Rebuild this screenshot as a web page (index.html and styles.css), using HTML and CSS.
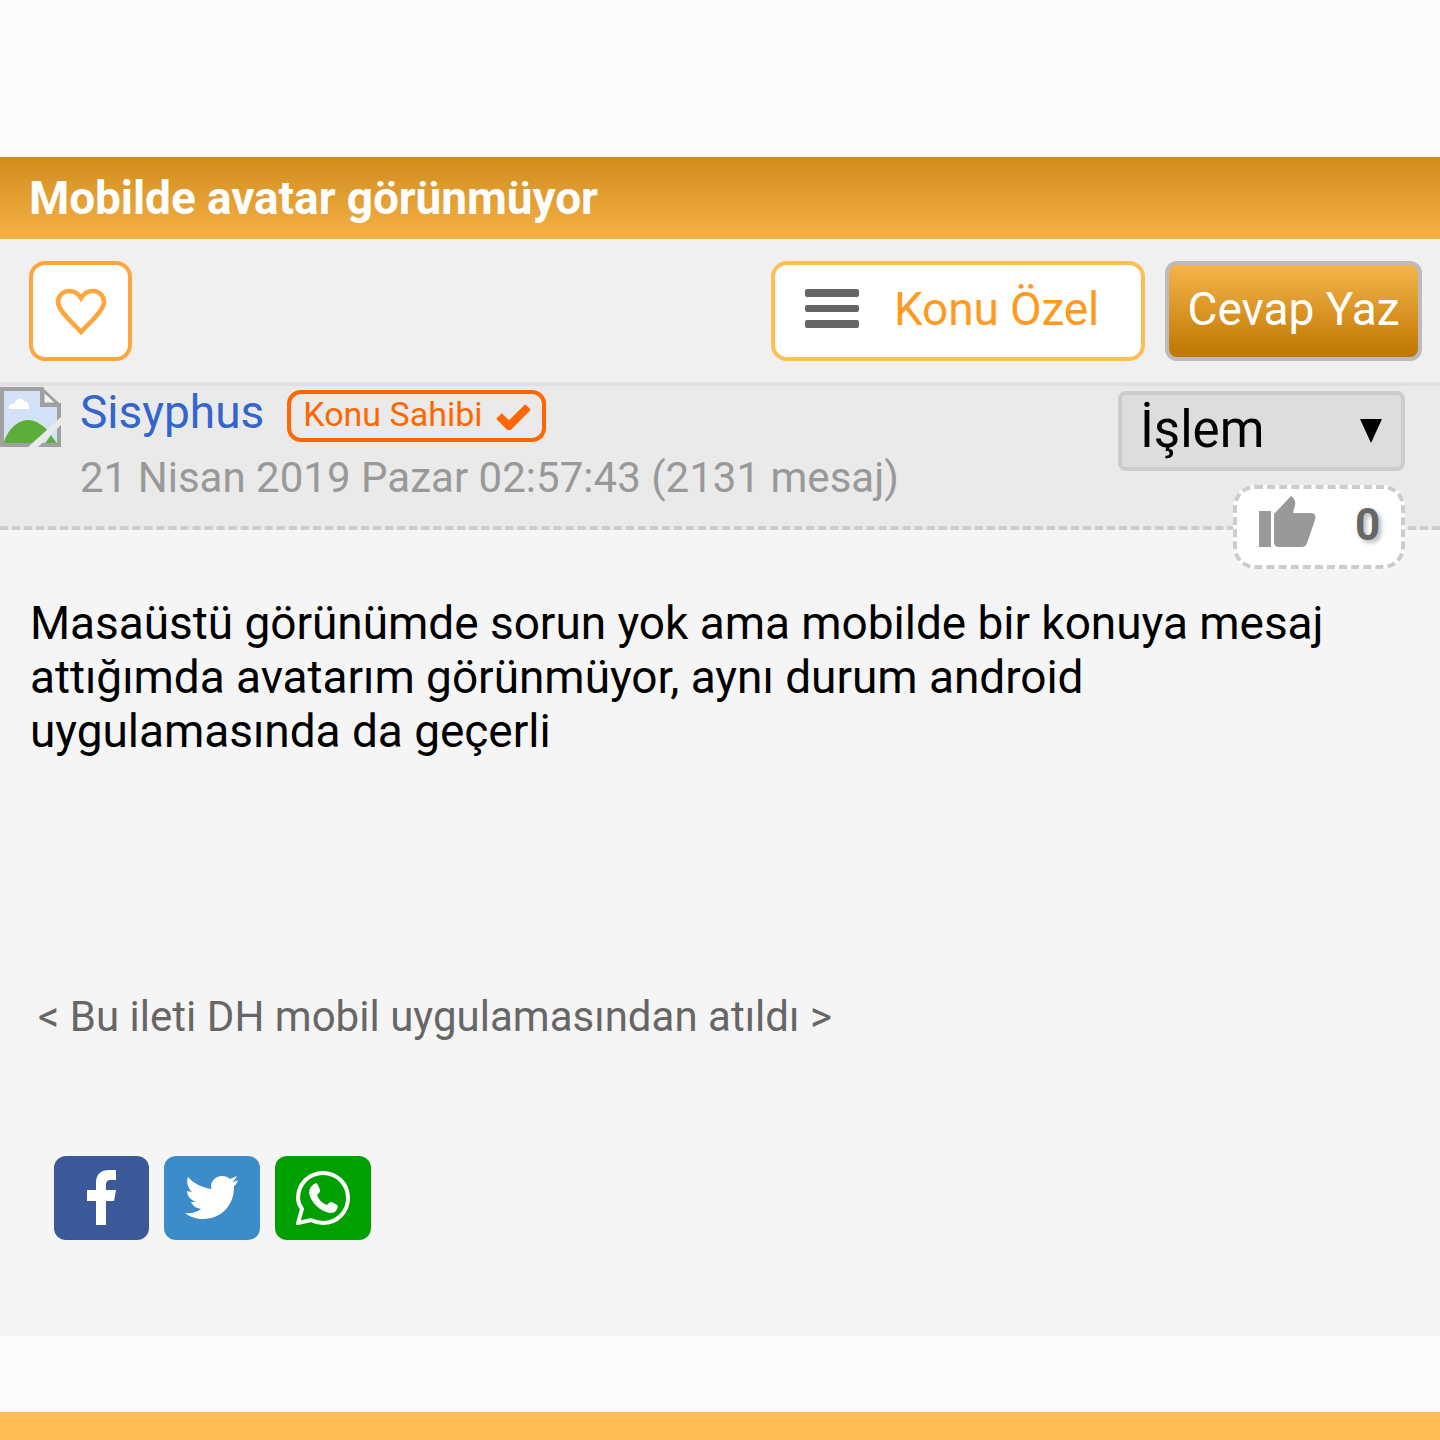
FILE: index.html
```html
<!DOCTYPE html>
<html lang="tr">
<head>
    <meta charset="UTF-8">
    <meta name="viewport" content="width=device-width, initial-scale=1.0">
    <title>Mobilde avatar görünmüyor</title>
    <link rel="stylesheet" href="styles.css">
</head>
<body>
    <div class="top-space"></div>

    <h1 class="topic-title">Mobilde avatar görünmüyor</h1>

    <div class="toolbar">
        <button class="fav-button">
            <svg width="54" height="48" viewBox="0 0 54 48">
                <path d="M27 45 C20 37 4 24 4 15 C4 8 10 4 15 4 C20 4 24 6 27 11 C30 6 34 4 39 4 C44 4 50 8 50 15 C50 24 34 37 27 45 Z" fill="none" stroke="#ffa53e" stroke-width="4.5"/>
            </svg>
        </button>
        <div class="toolbar-right">
            <button class="topic-menu">
                <span class="burger"><i></i><i></i><i></i></span>
                <span>Konu Özel</span>
            </button>
            <button class="reply-button">Cevap Yaz</button>
        </div>
    </div>

    <div class="post">
        <div class="post-head">
            <svg class="avatar" width="61" height="61" viewBox="0 0 61 61">
                <path d="M2 3 H42 L59 19 V59 H2 Z" fill="#d3e2f6"/>
                <path d="M9 23 C8 18 13 18 15 17 C16 12 22 11 24 15 C27 15 30 19 29 23 Z" fill="#fff"/>
                <path d="M3 59 C7 44 17 34 29 34 C38 35 45 41 50 47 L38 59 Z" fill="#5bae3a"/>
                <path d="M44 59 L51 49 L58 59 Z" fill="#5bae3a"/>
                <path d="M2 3 H42 V19 H59 V59 H2 Z" fill="none" stroke="#a0a0a0" stroke-width="4"/>
                <path d="M43 4 L58 18 H43 Z" fill="#f4f4f4" stroke="#a0a0a0" stroke-width="3"/>
                <path d="M27 62 L62 30 L62 38 L37 62 Z" fill="#eaeaea"/>
            </svg>
            <div class="post-info">
                <div class="post-author">
                    <a class="author-name">Sisyphus</a>
                    <span class="owner-badge"><span class="badge-label">Konu Sahibi</span>
                        <svg width="35" height="27" viewBox="0 0 35 27"><path d="M3 13 L13 23 L32 4" fill="none" stroke="#ff6600" stroke-width="8"/></svg>
                    </span>
                </div>
                <div class="post-date">21 Nisan 2019 Pazar 02:57:43 (2131 mesaj)</div>
            </div>
            <div class="post-actions">
                <div class="action-select"><span class="action-label">İşlem</span><span class="arrow"></span></div>
                <div class="like-box">
                    <svg class="like-icon" width="58" height="52" viewBox="0 0 58 52">
                        <path d="M1 15 H13 V51 H1 Z M16 18 L33 0 C36 2 38 5 37 9 L35 17 H53 C57 17 58 20 57 24 L49 47 C48 50 46 51 43 51 H21 C18 51 16 49 16 46 Z" fill="#999"/>
                    </svg>
                    <span class="like-count">0</span>
                </div>
            </div>
        </div>

        <div class="post-body">
            <p class="post-text">Masaüstü görünümde sorun yok ama mobilde bir konuya mesaj attığımda avatarım görünmüyor, aynı durum android uygulamasında da geçerli</p>
            <p class="post-source">&lt; Bu ileti DH mobil uygulamasından atıldı &gt;</p>
            <div class="share">
                <a class="share-btn fb">
                    <svg width="30" height="56" viewBox="0 0 30 56"><path d="M9 55 V31 H0 V20 H9 V13 C9 4 14 0 22 0 H29 V10 H24 C20 10 19 12 19 15 V20 H29 L27 31 H19 V55 Z" fill="#fff"/></svg>
                </a>
                <a class="share-btn tw">
                    <svg width="54" height="46" viewBox="0 0 54 46"><path d="M53 5 C51 6 49 7 47 7 C49 6 51 3 52 1 C50 2 47 3 45 4 C43 2 40 1 37 1 C31 1 26 6 26 11 C26 12 26 13 27 14 C18 13 9 9 3 2 C1 7 3 13 7 17 C5 17 3 16 2 16 C2 21 6 25 11 27 C9 27 8 27 6 27 C8 31 11 33 16 34 C12 37 6 39 0 38 C5 42 12 44 18 44 C38 44 49 28 49 13 C49 12 49 12 49 11 C51 10 52 8 53 5 Z" fill="#fff"/></svg>
                </a>
                <a class="share-btn wa">
                    <svg width="54" height="54" viewBox="0 0 54 54">
                        <path d="M2 52 L6 38 C3 34 2 31 2 27 C2 13 13 2 27 2 C41 2 52 13 52 27 C52 41 41 52 27 52 C23 52 19 51 15 49 Z" fill="none" stroke="#fff" stroke-width="4"/>
                        <path d="M18 13 C20 12 21 12 22 14 L24 19 C24 20 24 21 23 22 L21 24 C23 29 26 32 31 34 L33 32 C34 31 35 31 36 31 L41 34 C42 35 42 36 41 38 C40 41 37 42 34 42 C24 40 15 32 13 22 C13 18 15 15 18 13 Z" fill="#fff"/>
                    </svg>
                </a>
            </div>
        </div>
    </div>

    <div class="bottom-space"></div>
    <div class="footer-bar"></div>
</body>
</html>
```

FILE: styles.css
```css
body {
    font-family: 'Roboto', sans-serif;
    margin: 0;
    padding: 0;
    background: #fbfbfb;
    color: #000;
}

button {
    font-family: inherit;
    cursor: pointer;
}

.top-space {
    height: 157px;
}

.topic-title {
    margin: 0;
    height: 82px;
    padding-left: 29px;
    box-sizing: border-box;
    background: linear-gradient(to bottom, #d08c1c, #f5b146);
    color: #fff;
    font-size: 46px;
    font-weight: 700;
    line-height: 82px;
    letter-spacing: -0.08px;
}

.toolbar {
    display: flex;
    justify-content: space-between;
    align-items: flex-start;
    height: 147px;
    box-sizing: border-box;
    padding: 22px 18px 0 29px;
    background: #f0f0f0;
    border-bottom: 4px solid #e0e0e0;
}

.fav-button {
    display: flex;
    align-items: center;
    justify-content: center;
    width: 103px;
    height: 100px;
    padding: 0 0 0 1px;
    background: #fff;
    border: 4px solid #ffa53e;
    border-radius: 16px;
}

.toolbar-right {
    display: flex;
    gap: 20px;
}

.topic-menu {
    display: flex;
    align-items: center;
    gap: 35px;
    width: 374px;
    height: 100px;
    padding: 0 0 5px 30px;
    background: #fff;
    border: 4px solid #ffbd55;
    border-radius: 16px;
    color: #ff9a1e;
    font-size: 46px;
    letter-spacing: -0.15px;
}

.burger {
    display: flex;
    flex-direction: column;
    gap: 8px;
    width: 54px;
}

.burger i {
    display: block;
    height: 7.5px;
    background: #666;
    border-radius: 2px;
}

.reply-button {
    width: 257px;
    height: 100px;
    padding: 0 0 5px;
    background: linear-gradient(to bottom, #f6b44a, #bd7600);
    border: 4px solid #bbb;
    border-radius: 12px;
    color: #fff;
    font-size: 46px;
}

.post {
    background: #f5f5f5;
}

.post-head {
    display: flex;
    height: 144px;
    box-sizing: border-box;
    background: #eaeaea;
    border-bottom: 4px dashed #ccc;
}

.avatar {
    flex: none;
}

.post-info {
    flex: 1;
    margin-left: 19px;
}

.post-author {
    display: flex;
    align-items: center;
    gap: 23px;
    height: 52px;
}

.author-name {
    color: #3366cc;
    font-size: 46px;
}

.owner-badge {
    display: flex;
    align-items: center;
    gap: 13px;
    flex: none;
    height: 52px;
    box-sizing: border-box;
    margin-top: 8px;
    padding: 0 11px 0 12px;
    border: 4px solid #ff6600;
    border-radius: 14px;
    color: #ff6600;
    font-size: 34px;
}

.badge-label {
    margin-bottom: 4px;
}

.post-date {
    margin-top: 12px;
    color: #999;
    font-size: 42px;
    line-height: 56px;
    letter-spacing: 0.02px;
}

.post-actions {
    display: flex;
    flex-direction: column;
    align-items: flex-end;
    gap: 14px;
    flex: none;
    height: 163px;
    margin: 5px 35px 0 0;
}

.action-select {
    display: flex;
    align-items: center;
    justify-content: space-between;
    flex: none;
    width: 287px;
    height: 80px;
    box-sizing: border-box;
    padding: 0 19px 0 18px;
    background: #ddd;
    border: 4px solid #ccc;
    border-radius: 8px;
    font-size: 51px;
}

.action-label {
    margin-bottom: 4px;
}

.arrow {
    width: 0;
    height: 0;
    border-left: 11px solid transparent;
    border-right: 11px solid transparent;
    border-top: 24px solid #000;
}

.like-box {
    display: flex;
    align-items: center;
    gap: 39px;
    flex: none;
    position: relative;
    width: 172px;
    height: 84px;
    box-sizing: border-box;
    padding-left: 21px;
    background: #fff;
    border: 4px dashed #ccc;
    border-radius: 22px;
}

.like-icon {
    margin-bottom: 10px;
}

.like-count {
    margin-bottom: 4px;
    color: #666;
    font-size: 44px;
    font-weight: 700;
    text-shadow: 3px 3px 4px #bbb;
}

.post-body {
    height: 806px;
    box-sizing: border-box;
    padding: 66px 30px 0;
}

.post-text {
    max-width: 1340px;
    margin: 0;
    font-size: 46px;
    line-height: 54px;
    letter-spacing: -0.04px;
}

.post-source {
    margin: 231px 0 0 8px;
    color: #666;
    font-size: 42px;
    line-height: 56px;
    letter-spacing: 0.02px;
}

.share {
    display: flex;
    gap: 15px;
    margin: 111px 0 0 24px;
}

.share-btn {
    display: flex;
    align-items: center;
    justify-content: center;
    width: 96px;
    height: 84px;
    border-radius: 12px;
}

.share-btn.fb {
    background: #3b5998;
    width: 95px;
}

.share-btn.tw {
    background: #3b8cc9;
}

.share-btn.wa {
    background: #00a000;
}

.bottom-space {
    height: 76px;
}

.footer-bar {
    height: 28px;
    background: #ffbd55;
}
```
